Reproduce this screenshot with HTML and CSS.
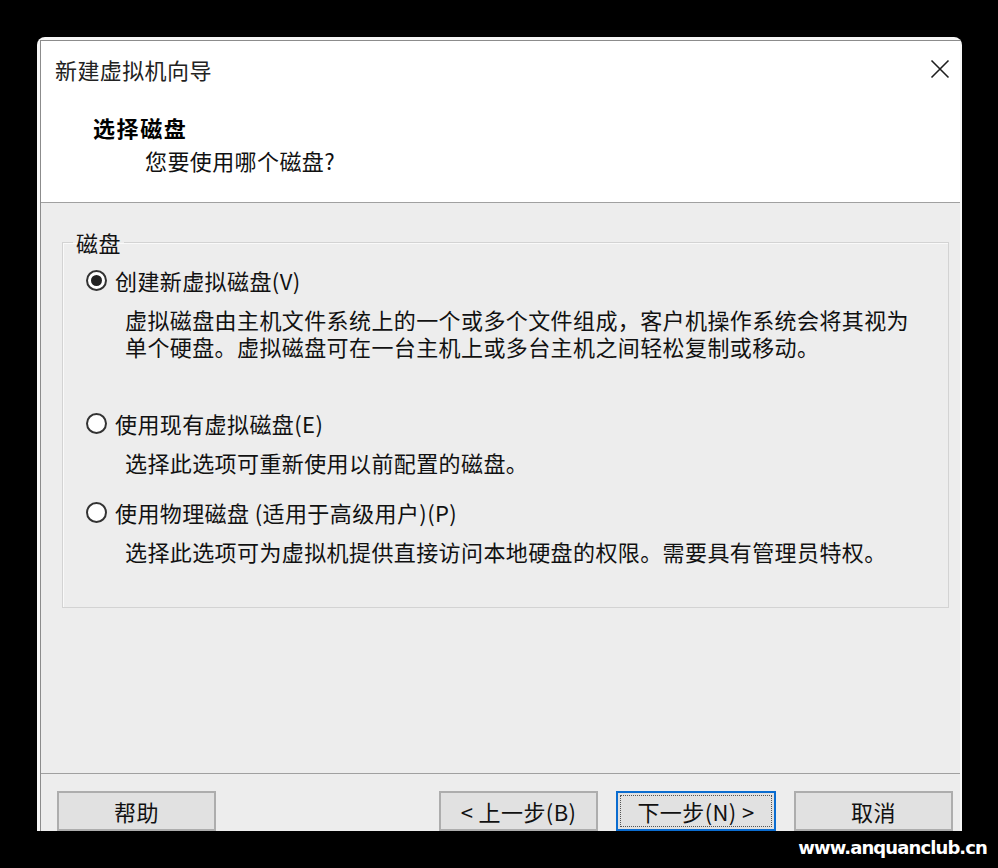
FILE: index.html
```html
<!DOCTYPE html>
<html lang="zh-CN">
<head>
<meta charset="utf-8">
<title>新建虚拟机向导</title>
<link rel="stylesheet" href="styles.css">
</head>
<body>
<div class="window">
  <div class="frame">
    <header class="wiz-header">
      <div class="titlebar">
        <span class="title">新建虚拟机向导</span>
        <button class="close" aria-label="关闭">
          <svg width="20" height="20" viewBox="0 0 20 20"><path d="M1.5 1.5 L18.5 18.5 M18.5 1.5 L1.5 18.5" stroke="#1e1e1e" stroke-width="1.6" fill="none"/></svg>
        </button>
      </div>
      <h1 class="heading">选择磁盘</h1>
      <p class="subheading">您要使用哪个磁盘?</p>
    </header>
    <main class="wiz-body">
      <fieldset class="group">
        <legend class="group-label">磁盘</legend>
        <div class="option">
          <div class="option-row"><span class="radio is-checked"><span class="radio-dot"></span></span><span class="option-label">创建新虚拟磁盘(V)</span></div>
          <div class="desc desc--tall"><span class="desc-line">虚拟磁盘由主机文件系统上的一个或多个文件组成，客户机操作系统会将其视为</span><span class="desc-line">单个硬盘。虚拟磁盘可在一台主机上或多台主机之间轻松复制或移动。</span></div>
        </div>
        <div class="option option--next">
          <div class="option-row"><span class="radio"></span><span class="option-label">使用现有虚拟磁盘(E)</span></div>
          <div class="desc"><span class="desc-line">选择此选项可重新使用以前配置的磁盘。</span></div>
        </div>
        <div class="option option--next">
          <div class="option-row"><span class="radio"></span><span class="option-label">使用物理磁盘 (适用于高级用户)(P)</span></div>
          <div class="desc"><span class="desc-line">选择此选项可为虚拟机提供直接访问本地硬盘的权限。需要具有管理员特权。</span></div>
        </div>
      </fieldset>
    </main>
    <footer class="wiz-footer">
      <button class="btn">帮助</button>
      <button class="btn btn--push">&lt; 上一步(B)</button>
      <button class="btn btn--default">下一步(N) &gt;</button>
      <button class="btn">取消</button>
    </footer>
  </div>
</div>
<div class="watermark">www.anquanclub.cn</div>
</body>
</html>
```
FILE: styles.css
```css
* { box-sizing: border-box; }

html, body {
  margin: 0;
  background: #000;
}

body {
  width: 998px;
  height: 868px;
  overflow: hidden;
  padding: 37px 0 0 37px;
  font-family: "Noto Sans CJK SC", "Noto Sans", sans-serif;
  font-size: 22px;
  letter-spacing: 0.4px;
  color: #111;
}

.window {
  width: 925px;
  height: 794px;
  background: #f7f7f7;
  border-radius: 8px 8px 0 0;
  padding: 3px 2px 0 3px;
  overflow: hidden;
}

.frame {
  height: 100%;
  border-top: 1px solid #8c8c8c;
  border-left: 1px solid #8c8c8c;
  display: flex;
  flex-direction: column;
  background: #ededed;
}

.wiz-header {
  height: 162px;
  flex: none;
  background: #fff;
  border-bottom: 1px solid #a0a0a0;
  padding: 13px 10px 0 14px;
}

.titlebar {
  display: flex;
  align-items: center;
  justify-content: space-between;
  height: 30px;
}

.title {
  line-height: 30px;
  color: #222;
}

.close {
  border: 0;
  background: none;
  padding: 0;
  width: 20px;
  height: 20px;
  display: flex;
}

.heading {
  margin: 28px 0 0 38px;
  font-size: 22px;
  font-weight: 700;
  letter-spacing: 1.6px;
  line-height: 30px;
  color: #000;
}

.subheading {
  margin: 3px 0 0 90px;
  line-height: 30px;
}

.wiz-body {
  flex: 1;
  min-height: 0;
  padding-top: 24px;
}

.group {
  margin: 0 11px 0 21px;
  padding: 0 10px 42px 10px;
  border: 1px solid #d3d3d3;
  box-shadow: inset 1px 1px 0 #f9f9f9;
  min-width: 0;
}

.group-label {
  padding: 0 3px;
  line-height: 30px;
}

.option:first-of-type {
  margin-top: 8px;
}

.option--next {
  margin-top: 21px;
}

.option-row {
  display: flex;
  align-items: center;
  height: 30px;
  margin-left: 13px;
  gap: 8px;
}

.option-label {
  line-height: 30px;
}

.radio {
  width: 21px;
  height: 21px;
  flex: none;
  border: 2px solid #333;
  border-radius: 50%;
  background: #fff;
  display: flex;
  align-items: center;
  justify-content: center;
}

.radio-dot {
  width: 11px;
  height: 11px;
  border-radius: 50%;
  background: #222;
}

.desc {
  margin: 11px 0 0 52px;
  display: flex;
  flex-direction: column;
}

.desc-line {
  display: block;
  height: 27px;
  line-height: 27px;
  white-space: nowrap;
}

.desc--tall {
  min-height: 81px;
}

.wiz-footer {
  height: 58px;
  flex: none;
  border-top: 1px solid #a0a0a0;
  padding: 17px 7px 0 16px;
  display: flex;
  align-items: flex-start;
  gap: 18px;
}

.btn {
  width: 159px;
  height: 40px;
  flex: none;
  font: inherit;
  letter-spacing: inherit;
  color: #111;
  background: #e1e1e1;
  border: 2px solid #adadad;
  padding: 0;
  line-height: 36px;
  text-align: center;
}

.btn--push {
  margin-left: auto;
}

.btn--default {
  width: 160px;
  border-color: #0a6cd0;
  outline: 1px dotted #555;
  outline-offset: -5px;
}

.watermark {
  margin-top: 6px;
  padding-right: 11px;
  text-align: right;
  font-family: "DejaVu Sans", sans-serif;
  font-weight: 700;
  font-size: 18px;
  letter-spacing: -0.9px;
  line-height: 22px;
  color: #fff;
}
```
